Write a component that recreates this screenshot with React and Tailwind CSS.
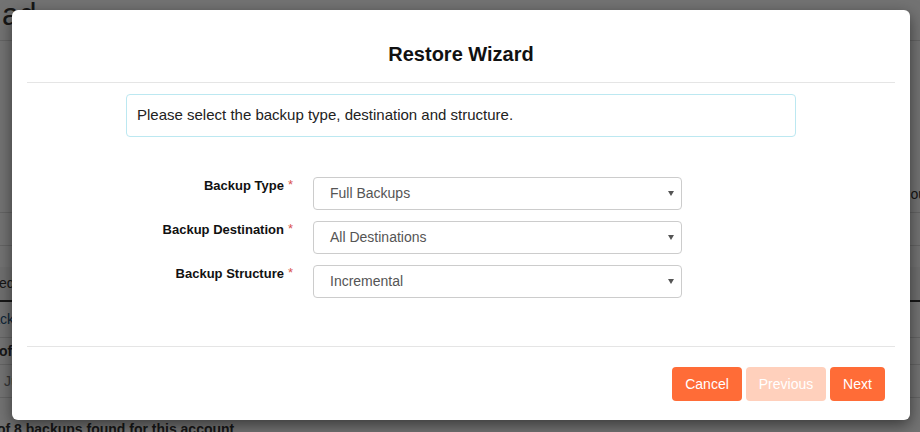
import React from "react";

const fields = [
  { label: "Backup Type", value: "Full Backups" },
  { label: "Backup Destination", value: "All Destinations" },
  { label: "Backup Structure", value: "Incremental" },
];

function FakeSelect({ value }) {
  return (
    <div className="flex h-[33px] items-center justify-between rounded-[4px] border border-[#cccccc] bg-white pl-[16px] pr-[7px] text-[14px] text-[#555555]">
      <span>{value}</span>
      <span className="h-0 w-0 border-x-[3.5px] border-t-[5px] border-x-transparent border-t-[#555555]" />
    </div>
  );
}

function BackgroundPage() {
  return (
    <div className="text-[14px] text-[#333333]">
      <div className="h-[41px] border-b border-[#dddddd] pl-[2px]">
        <h1 className="text-[31px] leading-[30px] font-normal">ad</h1>
      </div>
      <div className="flex h-[171px] items-end justify-end pb-[7px]">
        <span className="-mr-[6px]">ou</span>
      </div>
      <div className="h-[33px] border-t border-[#dddddd]" />
      <div className="h-[22px] border-t border-[#dddddd]" />
      <div className="flex h-[35px] items-center border-b-2 border-[#333333] bg-[#f5f5f5]">
        <span className="-ml-[1px]">ed</span>
      </div>
      <div className="flex h-[36px] items-center border-b border-[#dddddd] text-[#23527c]">
        <span className="-ml-[17px]">Backup</span>
      </div>
      <div className="flex h-[27px] items-center border-b border-[#dddddd] font-bold">
        <span className="-ml-[1px]">of 8</span>
      </div>
      <div className="flex h-[33px] items-center border-b border-[#dddddd] text-[#777777]">
        <span className="pl-[4px]">Jun</span>
      </div>
      <div className="pt-[21px] font-bold">
        <span className="-ml-[3px]">of 8 backups found for this account</span>
      </div>
    </div>
  );
}

export default function App() {
  return (
    <div className="relative h-[432px] w-[920px] overflow-hidden bg-white font-['Liberation_Sans',Arial,sans-serif]">
      <BackgroundPage />
      <div className="absolute inset-0 bg-black/55" />
      <div className="absolute left-[12px] top-[10px] flex h-[410px] w-[898px] flex-col rounded-[6px] bg-white px-[15px] shadow-[0_5px_15px_rgba(0,0,0,0.5)]">
        <div className="h-[73px] border-b border-[#e5e5e5] pt-[33px] text-center">
          <h4 className="text-[20px] leading-[22px] font-bold text-[#111111]">Restore Wizard</h4>
        </div>
        <div className="flex-1">
          <div className="mx-auto mt-[11px] flex h-[43px] w-[670px] items-center rounded-[4px] border border-[#bce8f1] px-[10px] text-[15px] text-[#222222]">
            Please select the backup type, destination and structure.
          </div>
          <div className="mt-[40px] grid grid-cols-[271px_369px] gap-x-[15px] gap-y-[11px]">
            {fields.map((f) => (
              <React.Fragment key={f.label}>
                <label className="pr-[5px] pt-[1px] text-right text-[13px] leading-[16px] font-bold text-[#111111]">
                  {f.label}
                  <span className="relative -top-[1px] ml-[4px] text-[13px] font-normal text-[#d9534f]">*</span>
                </label>
                <FakeSelect value={f.value} />
              </React.Fragment>
            ))}
          </div>
        </div>
        <div className="flex h-[74px] justify-end gap-[4px] border-t border-[#e5e5e5] pr-[10px] pt-[20px]">
          <button type="button" className="h-[34px] w-[70px] rounded-[4px] bg-[#ff6c37] text-[14px] text-white">Cancel</button>
          <button type="button" disabled className="h-[34px] w-[80px] rounded-[4px] bg-[#ffd0bc] text-[14px] text-white">Previous</button>
          <button type="button" className="h-[34px] w-[55px] rounded-[4px] bg-[#ff6c37] text-[14px] text-white">Next</button>
        </div>
      </div>
    </div>
  );
}
